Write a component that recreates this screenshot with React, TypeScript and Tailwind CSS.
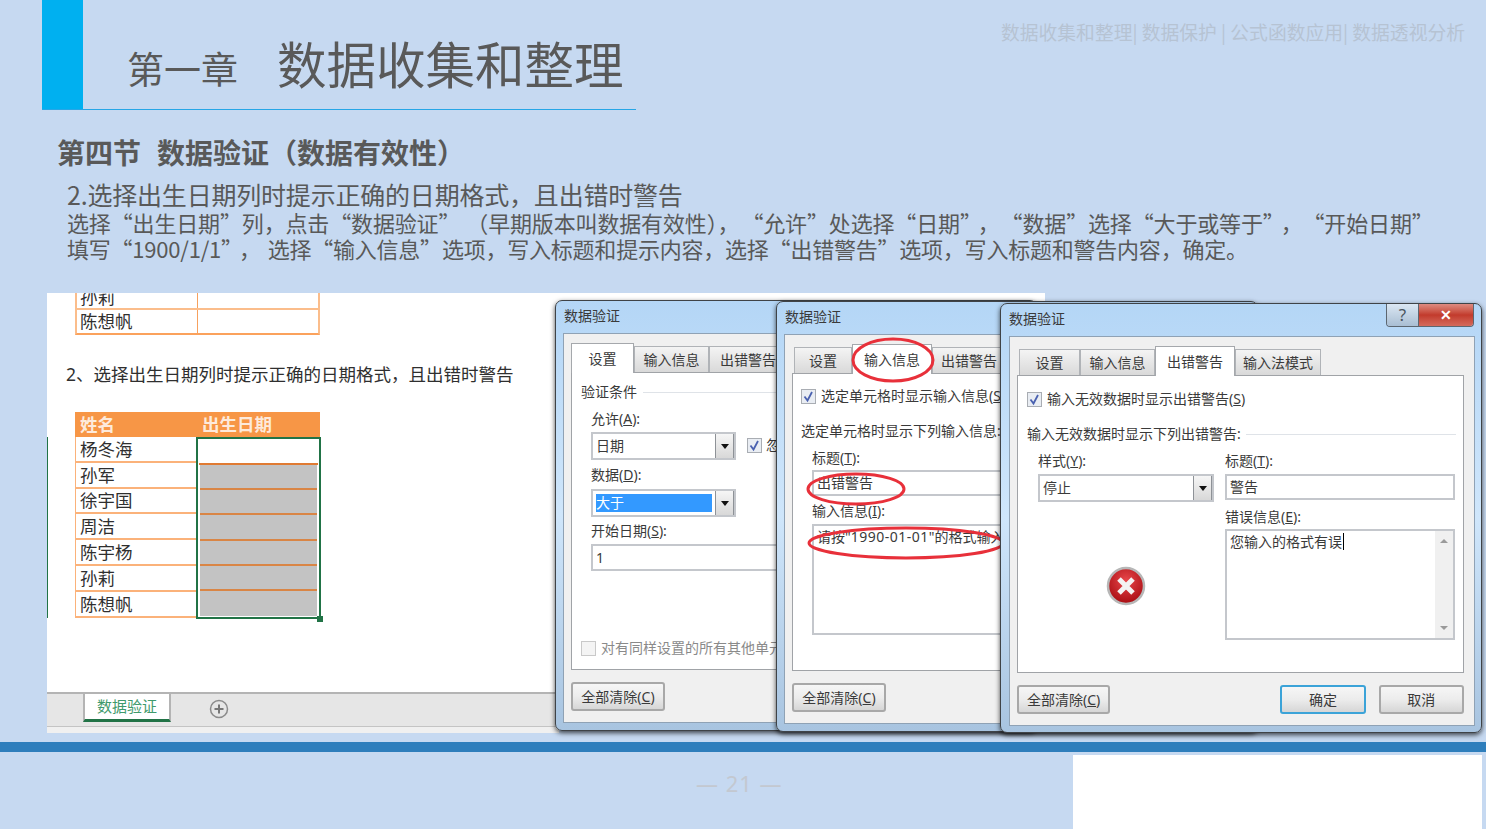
import type { ReactNode } from 'react';

const FONT = 'font-["Noto_Sans","Noto_Sans_CJK_SC",sans-serif]';

function Check() {
  return (
    <svg width="15" height="15" viewBox="0 0 15 15" className="shrink-0">
      <rect x="0.5" y="0.5" width="14" height="14" fill="#e9edf3" stroke="#a9adb3" />
      <path d="M3.5 7.5 L6.5 11.5 L11 3" fill="none" stroke="#4a61b0" strokeWidth="1.8" />
    </svg>
  );
}

function Select({ value, width, selected }: { value: string; width: number; selected?: boolean }) {
  return (
    <div className="flex h-[28px] border-2 border-[#c4c7cc] bg-white" style={{ width }}>
      <div className="flex flex-1 items-center p-[3px]">
        <span className={`flex h-[18px] flex-1 items-center ${selected ? 'bg-[#3399ff] text-white' : ''}`}>{value}</span>
      </div>
      <div className="flex w-[19px] items-center justify-center border-x border-[#8e9297] bg-gradient-to-b from-[#f6f6f6] to-[#d8d8d8]">
        <div className="h-0 w-0 border-x-[4px] border-t-[5px] border-x-transparent border-t-[#111]" />
      </div>
    </div>
  );
}

function Field({ children, className = '' }: { children?: ReactNode; className?: string }) {
  return <div className={`border-2 border-[#c4c7cc] bg-white px-[3px] ${className}`}>{children}</div>;
}

function Button({ children, className }: { children: ReactNode; className: string }) {
  return (
    <div className={`flex h-[29px] items-center justify-center rounded-[3px] border-2 bg-gradient-to-b from-[#f6f6f6] via-[#ececec] to-[#d6d6d6] ${className}`}>
      {children}
    </div>
  );
}

function ClearButton() {
  return <Button className="w-[94px] border-[#a8a8a8]">全部清除(<u>C</u>)</Button>;
}

type TabDef = { label: string; width: number };

function Dialog({ tabs, active, tabsOffset, footer, children, className, innerClass = 'ml-[7px]' }: {
  tabs: TabDef[];
  active: number;
  tabsOffset: number;
  footer: ReactNode;
  children: ReactNode;
  className: string;
  innerClass?: string;
}) {
  return (
    <div className={`absolute flex w-[482px] flex-col rounded-[7px] border border-[#3f4347] bg-gradient-to-b from-[#b4d6f6] via-[#cfe6fb] to-[#a8c4e0] text-[14px] leading-5 text-[#3a3a3a] shadow-[0_2px_5px_rgba(0,0,0,0.7)] ${className}`}>
      <div className="flex h-[32px] items-center pb-[3px] pl-[8px]">数据验证</div>
      <div className={`flex h-[390px] w-[466px] flex-col border border-[#8fa2b5] bg-[#f0f0f0] pl-[7px] pr-[10px] ${innerClass}`}>
        <div className="flex h-[38px] items-end" style={{ paddingLeft: tabsOffset }}>
          {tabs.map((t, i) => (
            <div
              key={t.label}
              style={{ width: t.width }}
              className={
                i === active
                  ? 'z-10 -mb-px flex h-[30px] items-center justify-center border border-b-0 border-[#a5a8ac] bg-white'
                  : 'flex h-[26px] items-center justify-center border border-b-0 border-[#b0b3b7] bg-gradient-to-b from-[#f4f4f4] to-[#d9d9d9]'
              }
            >
              {t.label}
            </div>
          ))}
        </div>
        <div className="relative h-[298px] border border-[#a0a3a7] bg-white">{children}</div>
        <div className="mt-[12px]">{footer}</div>
      </div>
    </div>
  );
}

function Sheet() {
  const names = ['杨冬海', '孙军', '徐宇国', '周洁', '陈宇杨', '孙莉', '陈想帆'];
  return (
    <div className="absolute left-[47px] top-0 flex h-[440px] w-[512px] flex-col bg-white text-[#2f2f2f]">
      <div className="h-[119px] shrink-0 pl-[28px]">
        <div className="flex h-[17px] w-[245px] overflow-hidden border-x-2 border-b-2 border-[#fbbd8b]">
          <div className="-mt-[8px] w-[121px] border-r border-[#f7a15e] pl-[3px] text-[17.5px] leading-6">孙莉</div>
        </div>
        <div className="flex h-[25px] w-[245px] border-x-2 border-b-2 border-[#fba25c] border-l-[#fbbd8b] border-r-[#fbbd8b]">
          <div className="flex w-[121px] items-center border-r border-[#f7a15e] pl-[3px] text-[17.5px]">陈想帆</div>
        </div>
        <p className="ml-[-9px] mt-[27px] whitespace-nowrap text-[17.5px] leading-6">2、选择出生日期列时提示正确的日期格式，且出错时警告</p>
      </div>
      <div className="relative ml-[28px] w-[245px] shrink-0">
        <div className="flex h-[25px] items-center bg-[#f79646] text-[17.5px] font-bold text-[#fdeadb]">
          <span className="w-[127px] pl-[5px]">姓名</span>
          <span>出生日期</span>
        </div>
        {names.map((n) => (
          <div key={n} className="flex h-[25.8px] border-b-2 border-x border-[#fbb27a]">
            <div className="flex w-[122px] items-center pl-[4px] text-[17.5px]">{n}</div>
            <div className="flex-1" />
          </div>
        ))}
        <div className="absolute left-[121px] top-[25px] flex h-[182px] w-[125px] flex-col border-2 border-[#217346] bg-white p-[1px]">
          <div className="h-[25px] shrink-0 border-b-2 border-[#e07b33] bg-white" />
          {[0, 1, 2, 3, 4, 5].map((i) => (
            <div key={i} className={`mx-[1px] h-[25.8px] bg-[#c3c3c3] ${i < 5 ? 'border-b-2 border-[#d98545]' : ''}`} />
          ))}
        </div>
        <div className="absolute left-[242px] top-[204px] h-[6px] w-[6px] bg-[#217346]" />
      </div>
      <div className="absolute left-0 top-[144px] h-[181px] w-px bg-[#217346]" />
      <div className="absolute bottom-0 left-0 right-0 flex h-[41px] flex-col border-t-2 border-[#b4b4b4]">
        <div className="flex h-[32px] items-start bg-[#e6e6e6] pl-[36px]">
          <div className="-mt-[2px] flex h-[30px] w-[88px] items-center justify-center border-x-2 border-t-2 border-b-[3px] border-x-[#b4b4b4] border-t-[#b4b4b4] border-b-[#217346] bg-white text-[15px] text-[#3f9a6c]">
            数据验证
          </div>
          <svg width="20" height="20" viewBox="0 0 20 20" className="ml-[38px] mt-[5px]">
            <circle cx="10" cy="10" r="8.5" fill="none" stroke="#8b8b8b" strokeWidth="1.5" />
            <path d="M10 5.5 V14.5 M5.5 10 H14.5" stroke="#777" strokeWidth="2" />
          </svg>
        </div>
        <div className="flex-1 border-t border-[#c4c4c4] bg-[#f0f0f0]" />
      </div>
    </div>
  );
}

function SettingsDialog() {
  return (
    <Dialog
      className="left-[555px] top-[7px] z-10 h-[431px]"
      active={0}
      tabsOffset={0}
      tabs={[{ label: '设置', width: 63 }, { label: '输入信息', width: 75 }, { label: '出错警告', width: 78 }]}
      footer={<ClearButton />}
    >
      <div className="flex flex-col pl-[9px] pt-[9px]">
        <div className="flex items-center gap-[6px]">
          <span>验证条件</span>
          <div className="h-px flex-1 bg-[#dfe3e8]" />
        </div>
        <div className="flex flex-col pl-[10px]">
          <span className="mt-[7px]">允许(<u>A</u>):</span>
          <div className="mt-[3px] flex items-start gap-[11px]">
            <Select value="日期" width={145} />
            <div className="mt-[3px] flex items-center gap-[4px]">
              <Check />
              <span>忽略空值(<u>B</u>)</span>
            </div>
          </div>
          <span className="mt-[5px]">数据(<u>D</u>):</span>
          <div className="mt-[4px]"><Select value="大于" width={145} selected /></div>
          <span className="mt-[4px]">开始日期(<u>S</u>):</span>
          <Field className="mt-[3px] flex h-[27px] w-[300px] items-center">1</Field>
        </div>
        <div className="mt-[67px] flex items-center gap-[5px] text-[#8a8a8a]">
          <div className="h-[15px] w-[15px] border border-[#c9c9c9] bg-[#f4f4f4]" />
          <span className="whitespace-nowrap">对有同样设置的所有其他单元格应用这些更改(<u>P</u>)</span>
        </div>
      </div>
    </Dialog>
  );
}

function InputDialog() {
  return (
    <Dialog
      className="left-[776px] top-[8px] z-20 h-[431px]"
      active={1}
      tabsOffset={2}
      tabs={[{ label: '设置', width: 58 }, { label: '输入信息', width: 80 }, { label: '出错警告', width: 74 }]}
      footer={<ClearButton />}
    >
      <div className="flex flex-col pl-[8px] pt-[12px]">
        <div className="flex items-center gap-[5px] whitespace-nowrap">
          <Check />
          <span>选定单元格时显示输入信息(<u>S</u>)</span>
        </div>
        <span className="mt-[15px] whitespace-nowrap">选定单元格时显示下列输入信息:</span>
        <div className="flex flex-col pl-[11px]">
          <span className="mt-[7px]">标题(<u>T</u>):</span>
          <Field className="mt-[2px] flex h-[26px] w-[420px] items-center">出错警告</Field>
          <span className="mt-[5px]">输入信息(<u>I</u>):</span>
          <Field className="mt-[3px] h-[111px] w-[420px] pt-[1px] whitespace-nowrap">
            请按"<span className="tracking-[0.5px]">1990-01-01</span>"的格式输入
          </Field>
        </div>
      </div>
      <svg width="230" height="260" viewBox="0 0 230 260" className="absolute -top-[45px] left-0 z-20">
        <g fill="none" stroke="#e8303a" strokeWidth="3">
          <ellipse cx="100" cy="31" rx="40" ry="21" />
          <ellipse cx="63" cy="160" rx="48" ry="15" />
          <ellipse cx="113" cy="214" rx="97" ry="15" />
        </g>
      </svg>
    </Dialog>
  );
}

function AlertDialog() {
  return (
    <Dialog
      className="left-[1000px] top-[10px] z-30 h-[430px]"
      innerClass="ml-[8px]"
      active={2}
      tabsOffset={2}
      tabs={[{ label: '设置', width: 61 }, { label: '输入信息', width: 75 }, { label: '出错警告', width: 80 }, { label: '输入法模式', width: 86 }]}
      footer={
        <div className="flex">
          <ClearButton />
          <Button className="ml-[170px] w-[86px] border-[#3ba3d8]">确定</Button>
          <Button className="ml-[13px] w-[86px] border-[#a8a8a8]">取消</Button>
        </div>
      }
    >
      <div className="absolute -top-[72px] right-[-11px] flex h-[23px] overflow-hidden rounded-b-[4px] border border-t-0 border-[#5c6670] text-white">
        <div className="flex w-[32px] items-center justify-center border-r border-[#5c6670] bg-gradient-to-b from-[#dbe7f3] to-[#a9bed3] text-[17px] text-[#4b5560]">?</div>
        <div className="flex w-[54px] items-center justify-center bg-gradient-to-b from-[#dd8a80] via-[#c23a2c] to-[#d46a5c] font-bold">✕</div>
      </div>
      <div className="flex flex-col pl-[9px] pr-[7px] pt-[13px]">
        <div className="flex items-center gap-[5px]">
          <Check />
          <span>输入无效数据时显示出错警告(<u>S</u>)</span>
        </div>
        <div className="mt-[15px] flex items-center gap-[5px]">
          <span>输入无效数据时显示下列出错警告:</span>
          <div className="h-px flex-1 bg-[#dfe3e8]" />
        </div>
        <div className="mt-[7px] flex pl-[11px]">
          <div className="flex w-[187px] flex-col">
            <span>样式(<u>Y</u>):</span>
            <div className="mt-[3px]"><Select value="停止" width={176} /></div>
            <svg width="40" height="40" viewBox="0 0 40 40" className="ml-[68px] mt-[64px]">
              <defs>
                <radialGradient id="err" cx="50%" cy="35%" r="65%">
                  <stop offset="0%" stopColor="#e8474a" />
                  <stop offset="100%" stopColor="#a80c12" />
                </radialGradient>
              </defs>
              <circle cx="20" cy="20" r="18" fill="url(#err)" stroke="#b7b7b7" strokeWidth="2.5" />
              <path d="M13 13 L27 27 M27 13 L13 27" stroke="#f3f3f3" strokeWidth="5" />
            </svg>
          </div>
          <div className="flex w-[230px] flex-col">
            <span>标题(<u>T</u>):</span>
            <Field className="mt-[3px] flex h-[26px] items-center">警告</Field>
            <span className="mt-[7px]">错误信息(<u>E</u>):</span>
            <div className="mt-[2px] flex h-[111px] border-2 border-[#c4c7cc] bg-white">
              <div className="flex flex-1 items-start pl-[3px] pt-[1px]">
                您输入的格式有误
                <span className="ml-px mt-[1px] h-[17px] w-px bg-black" />
              </div>
              <div className="flex w-[18px] flex-col items-center justify-between bg-[#f0f0f0] py-[8px]">
                <div className="h-0 w-0 border-x-[4px] border-b-[4px] border-x-transparent border-b-[#9a9a9a]" />
                <div className="h-0 w-0 border-x-[4px] border-t-[4px] border-x-transparent border-t-[#9a9a9a]" />
              </div>
            </div>
          </div>
        </div>
      </div>
    </Dialog>
  );
}

export default function App() {
  return (
    <div className={`flex h-[829px] w-[1486px] flex-col overflow-hidden bg-[#c6d9f1] ${FONT}`}>
      <header className="flex h-[110px] shrink-0 justify-between">
        <div className="ml-[42px] flex w-[594px] border-b border-[#27a6e6]">
          <div className="w-[41px] bg-[#00b0f0]" />
          <div className="flex items-baseline pl-[44px] pt-[34px] text-[#595959]">
            <span className="text-[37px] leading-[62px]">第一章</span>
            <span className="ml-[39px] text-[49.5px] leading-[62px]">数据收集和整理</span>
          </div>
        </div>
        <div className='whitespace-nowrap pr-[21px] pt-[18px] font-["Noto_Sans_CJK_SC",sans-serif] text-[18.8px] leading-7 text-[#b6c3d3]'>数据收集和整理| 数据保护 | 公式函数应用| 数据透视分析</div>
      </header>

      <section className='h-[183px] shrink-0 font-["Noto_Sans_CJK_SC",sans-serif] text-[#595959]'>
        <h1 className="flex pl-[57px] pt-[22px] text-[28px] font-bold leading-10">
          <span>第四节</span>
          <span className="ml-[16px]">数据验证（数据有效性）</span>
        </h1>
        <div className="pl-[67px] pt-[4px]">
          <p className="text-[25px] leading-[36px] tracking-[-0.2px]">2.选择出生日期列时提示正确的日期格式，且出错时警告</p>
          <div className="-mt-[3px] whitespace-nowrap text-[22px] leading-[26px] tracking-[-0.15px]">
            <p>
              选择“出生日期”列，点击“数据验证”
              <span className="ml-[17px]">（早期版本叫数据有效性），</span>
              <span className="ml-[13px]">“允许”处选择“日期”</span>
              <span className="ml-[7px]">，</span>
              <span className="ml-[12px]">“数据”选择“大于或等于”</span>
              <span className="ml-[7px]">，</span>
              <span className="ml-[11px]">“开始日期”</span>
            </p>
            <p className="tracking-[-0.22px]">
              填写“1900/1/1”
              <span className="ml-[7px]">，</span>
              <span className="ml-[7px]">选择“输入信息”选项，写入标题和提示内容，选择“出错警告”选项，写入标题和警告内容，确定。</span>
            </p>
          </div>
        </div>
      </section>

      <div className="relative h-[449px] shrink-0">
        <div className="absolute left-[555px] top-0 h-[10px] w-[490px] bg-white" />
        <div className="absolute left-[1160px] top-[8px] h-[2px] w-[2px] bg-[#555]" />
        <div className="absolute left-[1193px] top-[8px] h-[2px] w-[55px] bg-[#c98f8a]" />
        <Sheet />
        <SettingsDialog />
        <InputDialog />
        <AlertDialog />
      </div>

      <div className="h-[10px] shrink-0 bg-[#2e7ebc]" />

      <footer className="flex flex-1 items-start pl-[696px]">
        <div className="w-[377px] whitespace-nowrap pt-[15px] text-[22px] leading-8 tracking-[1px] text-[#c3c8d0]">— 21 —</div>
        <div className="mt-[3px] h-[74px] w-[409px] bg-white" />
      </footer>
    </div>
  );
}
